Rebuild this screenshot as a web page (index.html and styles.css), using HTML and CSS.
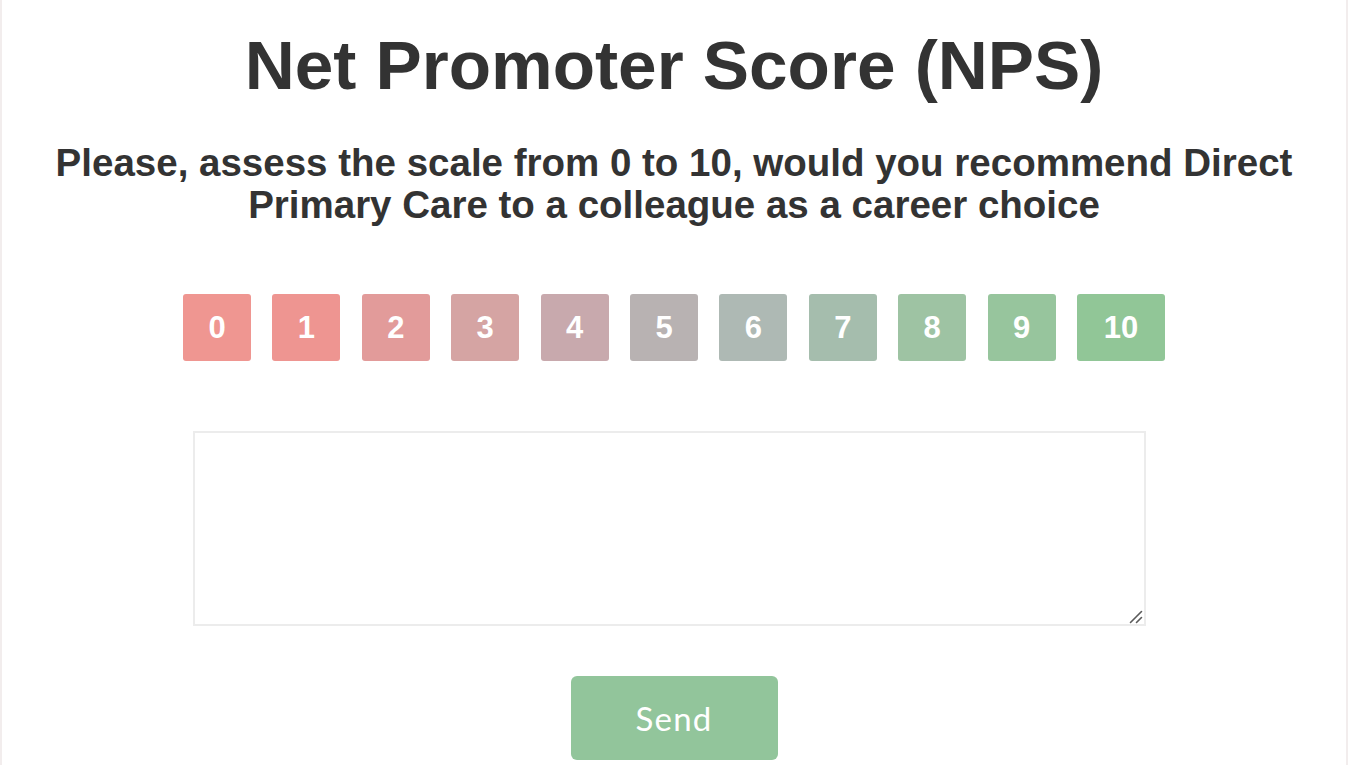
FILE: index.html
```html
<!DOCTYPE html>
<html lang="en">
<head>
<meta charset="utf-8">
<title>Net Promoter Score (NPS)</title>
<link rel="stylesheet" href="styles.css">
</head>
<body>
<main class="page">
  <h1 class="title">Net Promoter Score (NPS)</h1>
  <p class="question">Please, assess the scale from 0 to 10, would you recommend Direct Primary Care to a colleague as a career choice</p>
  <div class="scale">
    <button class="score s0">0</button>
    <button class="score s1">1</button>
    <button class="score s2">2</button>
    <button class="score s3">3</button>
    <button class="score s4">4</button>
    <button class="score s5">5</button>
    <button class="score s6">6</button>
    <button class="score s7">7</button>
    <button class="score s8">8</button>
    <button class="score s9">9</button>
    <button class="score s10 wide">10</button>
  </div>
  <div class="comment-wrap">
    <textarea class="comment"></textarea>
    <svg class="grip" width="16" height="16" viewBox="0 0 16 16" aria-hidden="true">
      <rect width="16" height="16" fill="#ffffff"/>
      <path d="M2.5 14.5 L13.5 3.5 M8.5 14.5 L13.5 9.5" stroke="#5a5a5a" stroke-width="1.6" stroke-linecap="round" fill="none"/>
    </svg>
  </div>
  <div class="actions">
    <button class="send">Send</button>
  </div>
</main>
</body>
</html>
```
FILE: styles.css
```css
html, body {
  margin: 0;
  padding: 0;
  background: #ffffff;
}
body {
  font-family: "Liberation Sans", Arial, sans-serif;
  color: #333333;
}
.page {
  width: 1344px;
  height: 765px;
  border-left: 2px solid #f2eded;
  border-right: 2px solid #f2eded;
  box-sizing: content-box;
  overflow: hidden;
}
.title {
  margin: 25px 0 0;
  font-size: 69.3px;
  font-weight: 700;
  line-height: normal;
  text-align: center;
  color: #333333;
}
.question {
  margin: 37px auto 0;
  width: 1280px;
  font-size: 38.5px;
  font-weight: 700;
  line-height: 42px;
  text-align: center;
  color: #333333;
}
.scale {
  margin-top: 68px;
  display: flex;
  justify-content: center;
  gap: 21.4px;
}
.score {
  width: 68px;
  height: 67px;
  padding: 0;
  border: none;
  border-radius: 3px;
  font-family: "Liberation Sans", Arial, sans-serif;
  font-size: 31px;
  font-weight: 700;
  color: #ffffff;
  cursor: pointer;
}
.score.wide { width: 88px; }
.s0 { background: #ef9691; }
.s1 { background: #ee9591; }
.s2 { background: #e29b9a; }
.s3 { background: #d5a4a3; }
.s4 { background: #c8a9ad; }
.s5 { background: #b8b2b2; }
.s6 { background: #aeb9b4; }
.s7 { background: #a5bdad; }
.s8 { background: #9ec3a3; }
.s9 { background: #97c59d; }
.s10 { background: #91c697; }
.comment-wrap {
  position: relative;
  width: 962px;
  margin: 70px auto 0;
}
.comment {
  display: block;
  width: 953px;
  height: 195px;
  box-sizing: border-box;
  border: 2px solid #ececec;
  border-radius: 0;
  padding: 8px;
  font-family: "Liberation Sans", Arial, sans-serif;
  font-size: 16px;
  resize: both;
  outline: none;
}
.grip {
  position: absolute;
  left: 935px;
  top: 177px;
  pointer-events: none;
}
.actions {
  margin-top: 50px;
  display: flex;
  justify-content: center;
}
.send {
  width: 207px;
  height: 84px;
  border: none;
  border-radius: 6px;
  background: #92c59b;
  color: #ffffff;
  font-family: Lato, "Open Sans", sans-serif;
  font-size: 33px;
  font-weight: 400;
  letter-spacing: 1.2px;
  cursor: pointer;
}
```
